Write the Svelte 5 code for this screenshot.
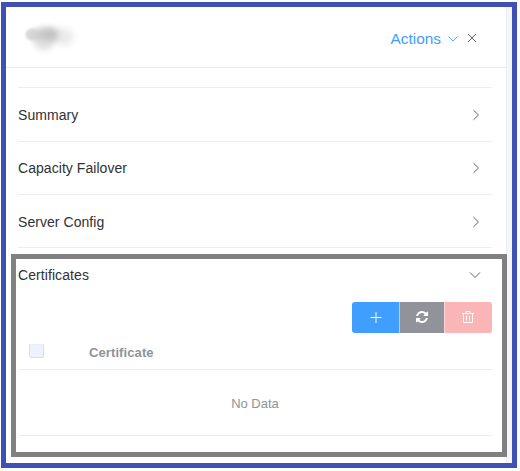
<script>
  const sections = ['Summary', 'Capacity Failover', 'Server Config'];
</script>

<div class="frame">
  <div class="panel">
    <header>
      <div class="name">
        <svg width="60" height="40" viewBox="0 0 60 40">
          <defs>
            <filter id="soft" x="-50%" y="-50%" width="200%" height="200%"><feGaussianBlur stdDeviation="3" /></filter>
            <filter id="fine" x="-50%" y="-50%" width="200%" height="200%"><feGaussianBlur stdDeviation="1.2" /></filter>
          </defs>
          <ellipse cx="24" cy="17.500" rx="15" ry="8" fill="#cacaca" filter="url(#soft)" />
          <ellipse cx="22" cy="26" rx="9" ry="6" fill="#d8d8d8" opacity=".75" filter="url(#soft)" />
          <ellipse cx="43" cy="19" rx="9" ry="9" fill="#e4e4e4" opacity=".7" filter="url(#soft)" />
          <ellipse cx="10" cy="16.500" rx="6.500" ry="6" fill="#d0d0d0" opacity=".75" filter="url(#fine)" />
          <ellipse cx="28" cy="16" rx="7" ry="5" fill="#c0c0c2" opacity=".7" filter="url(#soft)" />
        </svg>
      </div>
      <span class="actions">Actions</span>
      <svg class="caret" width="12" height="12" viewBox="0 0 12 12"><path d="M1.500 3.500 6 8l4.500-4.500" fill="none" stroke="#409eff" stroke-width=".9" /></svg>
      <svg class="close" width="10" height="10" viewBox="0 0 10 10"><path d="M1 1l8 8M9 1 1 9" fill="none" stroke="#5d6067" stroke-width="1" /></svg>
    </header>

    <div class="content">
      {#each sections as title}
        <div class="row">
          <span>{title}</span>
          <svg width="12" height="12" viewBox="0 0 12 12"><path d="M3.500 1.200 8.500 6l-5 4.800" fill="none" stroke="#5f636b" stroke-width="1" /></svg>
        </div>
      {/each}

      <section>
        <div class="open">
          <span>Certificates</span>
          <svg width="12" height="12" viewBox="0 0 12 12"><path d="M1 3.500 6 8.500l5-5" fill="none" stroke="#5f636b" stroke-width="1" /></svg>
        </div>
        <div class="buttons">
          <button class="add" aria-label="Add">
            <svg width="14" height="14" viewBox="0 0 14 14"><path d="M7.500 1v11M2 6.500h11" stroke="#fff" stroke-width="1" /></svg>
          </button>
          <button class="refresh" aria-label="Refresh">
            <svg width="12" height="12" viewBox="0 0 1536 1536"><path fill="#fff" d="M1511 928q0 5-1 7-64 268-268 434.500T764 1536q-146 0-282.500-55T238 1324l-129 129q-19 19-45 19t-45-19-19-45V960q0-26 19-45t45-19h448q26 0 45 19t19 45-19 45l-137 137q71 66 161 102t187 36q134 0 250-65t186-179q11-17 53-117 8-23 30-23h192q13 0 22.500 9.500t9.500 22.500zm25-800v448q0 26-19 45t-45 19h-448q-26 0-45-19t-19-45 19-45l138-138Q969 256 768 256q-134 0-250 65T332 500q-11 17-53 117-8 23-30 23H50q-13 0-22.500-9.500T18 608v-7q65-268 270-434.500T768 0q146 0 284 55.500T1297 212l130-129q19-19 45-19t45 19 19 45z" /></svg>
          </button>
          <button class="remove" aria-label="Delete">
            <svg width="12" height="13" viewBox="0 0 12 13"><path d="M0 2.500h12M4 2.500v-2h4v2M1.500 2.500v9h9v-9M4.500 4.500v5M7.500 4.500v5" fill="none" stroke="#fff" stroke-width="1" /></svg>
          </button>
        </div>
        <div class="thead"><i class="check"></i><b>Certificate</b></div>
        <div class="empty">No Data</div>
      </section>
    </div>
  </div>
</div>

<style>
  :global(body) {
    background: #fff;
  }
  .frame {
    box-sizing: border-box;
    width: 516px;
    height: 466px;
    margin: 2px 0 0 1px;
    border: 5px solid #3f51b5;
    background: #f5f6fa;
    font-family: "Liberation Sans", Arial, sans-serif;
    font-size: 14px;
    color: #303133;
    display: flow-root;
  }
  .panel {
    width: 500px;
    height: 456px;
    background: #fff;
    box-shadow: 1px 0 #ebecf3;
    border-top-right-radius: 3px;
  }
  header {
    box-sizing: border-box;
    height: 61px;
    border-bottom: 1px solid #ebeef0;
    padding: 2px 29px 0 16px;
    display: flex;
    align-items: center;
  }
  .name {
    flex: 1;
    height: 40px;
  }
  .name svg, .row svg, .open svg, button svg {
    display: block;
  }
  .actions {
    font-size: 15.400px;
    line-height: 18px;
    padding-top: 2px;
    color: #409eff;
  }
  .caret {
    margin: 2px 8px 0 6px;
  }
  .content {
    padding: 19px 14px 0 12px;
  }
  .row {
    box-sizing: border-box;
    height: 53px;
    border-top: 1px solid #ebeef0;
    padding: 0 10px 0 0;
    letter-spacing: .05px;
    display: flex;
    align-items: center;
    justify-content: space-between;
  }
  .row:first-child {
    height: 54px;
  }
  .row:nth-child(3) {
    height: 54px;
    padding-top: 2px;
    border-bottom: 1px solid #ebeef0;
  }
  section {
    position: relative;
    box-sizing: border-box;
    width: 496px;
    height: 203px;
    margin: 6px 0 0 -7px;
    border: 5px solid #808080;
    padding: 0 10px 0 2px;
    background: #fff;
  }
  .open {
    height: 32px;
    padding-right: 11px;
    letter-spacing: .08px;
    display: flex;
    align-items: center;
    justify-content: space-between;
  }
  .buttons {
    display: flex;
    justify-content: flex-end;
    margin-top: 11px;
    height: 31px;
  }
  button {
    box-sizing: border-box;
    border: 0;
    padding: 0;
    display: flex;
    align-items: center;
    justify-content: center;
  }
  .add {
    width: 48px;
    background: #409eff;
    border-right: 1px solid #a9d2fc;
    border-radius: 3px 0 0 3px;
  }
  .add svg {
    margin: 1px 0 0 1px;
    transform: translateX(-.5px);
  }
  .refresh {
    width: 44px;
    background: #909399;
  }
  .refresh svg {
    margin-bottom: 1px;
  }
  .remove {
    width: 48px;
    background: #fab6b6;
    border-left: 1px solid #fbd5d6;
    border-radius: 0 3px 3px 0;
  }
  .remove svg {
    margin-right: 1px;
  }
  .thead {
    box-sizing: border-box;
    height: 37px;
    border-bottom: 1px solid #ebeef0;
    padding: 11px 0 0 11px;
    display: flex;
    font-size: 13px;
    line-height: 17px;
    letter-spacing: .1px;
    color: #909399;
  }
  .check {
    box-sizing: border-box;
    width: 15px;
    height: 14px;
    margin-right: 45px;
    background: #edf2fc;
    border: 1px solid #d9dde8;
    border-top-color: #e8edf6;
    border-radius: 0 0 2px 2px;
  }
  .empty {
    box-sizing: border-box;
    height: 66px;
    border-bottom: 1px solid #ebeef0;
    padding-top: 2px;
    display: flex;
    align-items: center;
    justify-content: center;
    font-size: 13px;
    color: #909399;
  }
</style>
